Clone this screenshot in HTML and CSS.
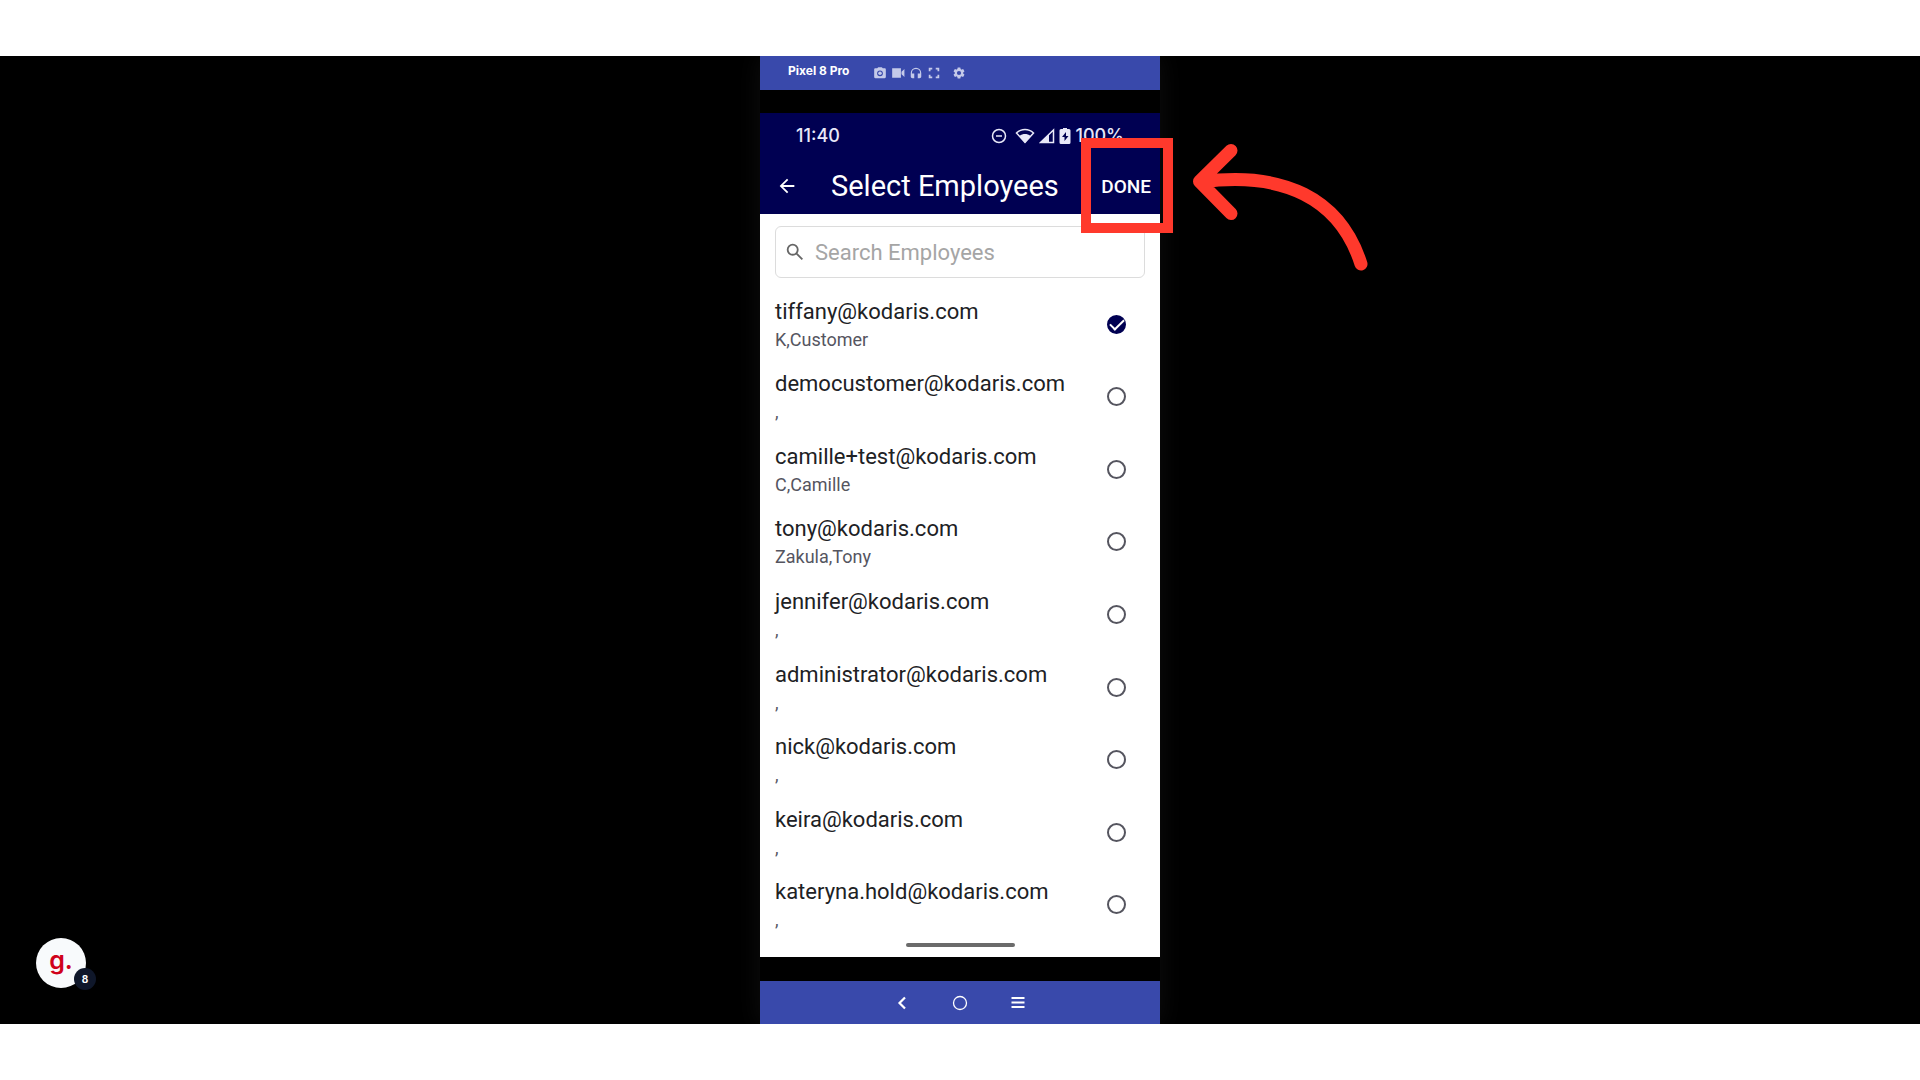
FILE: index.html
```html
<!DOCTYPE html>
<html lang="en">
<head>
    <meta charset="UTF-8">
    <meta name="viewport" content="width=device-width, initial-scale=1.0">
    <title>Select Employees</title>
    <link rel="stylesheet" href="styles.css">
</head>
<body>

<main class="stage">
    <div class="phone">
        <div class="emulator-bar">
            <span class="device-name">Pixel 8 Pro</span>
            <div class="tools">
                <button type="button" aria-label="Screenshot"><svg viewBox="0 0 24 24"><path fill-rule="evenodd" d="M9 2 7.200 4H4c-1.100 0-2 .9-2 2v13c0 1.100.9 2 2 2h16c1.100 0 2-.9 2-2V6c0-1.100-.9-2-2-2h-3.200L15 2zM12 17.500a5 5 0 1 1 0-10 5 5 0 0 1 0 10z"/><circle cx="12" cy="12.500" r="3"/></svg></button>
                <button type="button" aria-label="Record"><svg viewBox="0 0 24 24"><path d="M2 4h15v16H2zM18 10l5-5v14l-5-5z"/></svg></button>
                <button type="button" aria-label="Audio"><svg viewBox="0 0 24 24"><path d="M12 3a9 9 0 0 0-9 9v6c0 1.700 1.300 3 3 3h3v-8H5v-1a7 7 0 0 1 14 0v1h-4v8h3c1.700 0 3-1.300 3-3v-6a9 9 0 0 0-9-9z"/></svg></button>
                <button type="button" aria-label="Full screen"><svg viewBox="0 0 24 24"><path d="M3 3h6v3H6v3H3zM15 3h6v6h-3V6h-3zM3 15h3v3h3v3H3zM18 15h3v6h-6v-3h3z"/></svg></button>
                <button type="button" class="settings" aria-label="Settings"><svg viewBox="0 0 24 24"><path d="M19.140 12.940c.04-.3.060-.61.060-.94s-.02-.64-.07-.94l2.030-1.580a.49.490 0 0 0 .12-.61l-1.920-3.320a.49.490 0 0 0-.59-.22l-2.390.96a7 7 0 0 0-1.620-.94l-.36-2.540a.48.480 0 0 0-.48-.41h-3.840a.47.470 0 0 0-.47.410l-.36 2.540c-.59.240-1.130.57-1.620.94l-2.390-.96a.48.480 0 0 0-.59.220L2.740 8.870a.48.480 0 0 0 .12.610l2.030 1.580a6 6 0 0 0-.02 1.880l-2.030 1.580a.49.490 0 0 0-.12.610l1.920 3.320c.12.220.37.290.59.220l2.390-.96c.5.380 1.030.7 1.620.94l.36 2.540c.05.240.24.410.48.410h3.840c.24 0 .44-.17.470-.41l.36-2.540a7 7 0 0 0 1.620-.94l2.390.96c.22.080.47 0 .59-.22l1.920-3.320a.47.470 0 0 0-.12-.61zM12 15.600a3.600 3.600 0 1 1 0-7.200 3.600 3.600 0 0 1 0 7.200z"/></svg></button>
            </div>
        </div>

        <div class="screen">
            <div class="status-bar">
                <span>11:40</span>
                <div class="status-icons">
                    <svg class="dnd" viewBox="0 0 16 16"><circle cx="8" cy="8" r="6.500"/><path d="M5 8h6"/></svg>
                    <svg class="wifi" viewBox="0 0 20 16"><path class="outline" d="M1.500 5c5-4.700 12-4.700 17 0L10 14.500z"/><path d="M4.500 8c3.500-2.600 7.500-2.600 11 0L10 15z"/></svg>
                    <svg class="signal" viewBox="0 0 16 16"><path class="outline" d="M1.500 14.500 14.500 2v12.500z"/><path d="M1 15l9-9v9z"/></svg>
                    <svg class="battery" viewBox="0 0 12 18"><path fill-rule="evenodd" d="M4 1h4v1h2q1.500 0 1.500 1.500v12Q11.500 17 10 17H2Q.5 17 .5 15.500v-12Q.5 2 2 2h2zM7 5l-4 5h2.500v4l4-5H7z"/></svg>
                    <span>100%</span>
                </div>
            </div>

            <header class="app-bar">
                <button type="button" class="back" aria-label="Back"><svg viewBox="0 0 24 24"><path d="M20 11H7.800l5.600-5.600L12 4l-8 8 8 8 1.400-1.400L7.800 13H20z"/></svg></button>
                <h1>Select Employees</h1>
                <button type="button" class="done">DONE</button>
            </header>

            <div class="search">
                <label for="search" aria-label="Search Employees"><svg viewBox="0 0 24 24"><circle cx="9.500" cy="9.500" r="5.500"/><path d="M13.700 13.700 20 20"/></svg></label>
                <input type="text" id="search" name="search" placeholder="Search Employees">
            </div>

            <ul class="employees">
                <li><label for="e1"><span class="email">tiffany@kodaris.com</span><span class="name">K,Customer</span></label><input type="checkbox" id="e1" checked></li>
                <li><label for="e2"><span class="email">democustomer@kodaris.com</span><span class="name">,</span></label><input type="checkbox" id="e2"></li>
                <li><label for="e3"><span class="email">camille+test@kodaris.com</span><span class="name">C,Camille</span></label><input type="checkbox" id="e3"></li>
                <li><label for="e4"><span class="email">tony@kodaris.com</span><span class="name">Zakula,Tony</span></label><input type="checkbox" id="e4"></li>
                <li><label for="e5"><span class="email">jennifer@kodaris.com</span><span class="name">,</span></label><input type="checkbox" id="e5"></li>
                <li><label for="e6"><span class="email">administrator@kodaris.com</span><span class="name">,</span></label><input type="checkbox" id="e6"></li>
                <li><label for="e7"><span class="email">nick@kodaris.com</span><span class="name">,</span></label><input type="checkbox" id="e7"></li>
                <li><label for="e8"><span class="email">keira@kodaris.com</span><span class="name">,</span></label><input type="checkbox" id="e8"></li>
                <li><label for="e9"><span class="email">kateryna.hold@kodaris.com</span><span class="name">,</span></label><input type="checkbox" id="e9"></li>
            </ul>

            <div class="home-bar"></div>
        </div>

        <nav class="nav-bar">
            <button type="button" aria-label="Back"><svg viewBox="0 0 16 16"><path class="thick" d="M11 2.500 5.500 8l5.500 5.500"/></svg></button>
            <button type="button" aria-label="Home"><svg viewBox="0 0 16 16"><circle cx="8" cy="8" r="6.500"/></svg></button>
            <button type="button" aria-label="Menu"><svg viewBox="0 0 16 16"><path class="thick" d="M1.500 3h13M1.500 7.500h13M1.500 12h13"/></svg></button>
        </nav>

        <!-- callout on the DONE button -->
        <div class="highlight"></div>
        <svg class="arrow" viewBox="0 0 176 128"><path d="M38 6.500 6.500 37.500 38 69.500M8 38C90 27 147 54 168 120"/></svg>
    </div>

    <button type="button" class="guide" aria-label="Guide steps">
        <span class="guide-logo">g.</span>
        <span class="guide-count">8</span>
    </button>
</main>

</body>
</html>
```
FILE: styles.css
```css
* {
    box-sizing: border-box;
}
body {
    margin: 0;
    padding: 56px 0;
    background-color: #fff;
    font-family: Roboto, sans-serif;
}
button {
    padding: 0;
    border: none;
    background: none;
    color: inherit;
    font: inherit;
    cursor: pointer;
}
svg {
    display: block;
    fill: currentColor;
}
.stage {
    position: relative;
    display: flex;
    justify-content: center;
    min-height: calc(100vh - 112px);
    background-color: #000;
    overflow: hidden;
}
.phone {
    position: relative;
    display: flex;
    flex-direction: column;
    width: 400px;
    background-color: #000;
    box-shadow: 0 0 24px rgba(255, 255, 255, 0.06);
}

/* emulator toolbar */
.emulator-bar {
    display: flex;
    align-items: center;
    gap: 24px;
    height: 34px;
    padding: 0 28px;
    background-color: #3949ab;
    color: #fff;
}
.device-name {
    padding-bottom: 5px;
    font: bold 12px "Inter", sans-serif;
}
.tools {
    display: flex;
    gap: 4px;
    color: #c5cae9;
}
.tools svg {
    width: 14px;
    height: 14px;
}
.tools .settings {
    margin-left: 7px;
}

/* app screen */
.screen {
    display: flex;
    flex: 1;
    flex-direction: column;
    margin: 23px 0 24px;
    background-color: #fff;
}
.status-bar {
    display: flex;
    align-items: center;
    justify-content: space-between;
    height: 45px;
    padding: 0 36px;
    background-color: #000052;
    color: #e8e8f8;
    font: 500 18px "Inter", sans-serif;
}
.status-icons {
    display: flex;
    align-items: center;
    gap: 4px;
}
.dnd {
    width: 16px;
    height: 16px;
    margin-right: 4px;
    fill: none;
    stroke: currentColor;
    stroke-width: 1.5;
}
.wifi {
    width: 20px;
    height: 16px;
}
.signal {
    width: 16px;
    height: 16px;
}
.outline {
    fill: none;
    stroke: currentColor;
    stroke-width: 1.5;
}
.battery {
    width: 12px;
    height: 18px;
}
.app-bar {
    display: flex;
    align-items: center;
    height: 56px;
    padding: 0 9px 0 16px;
    background-color: #000052;
    color: #fff;
}
.back svg {
    width: 22px;
    height: 22px;
}
.app-bar h1 {
    flex: 1;
    margin: 0 0 0 33px;
    font-size: 29px;
    font-weight: 400;
}
.done {
    font-size: 19px;
    font-weight: 500;
}
.search {
    display: flex;
    align-items: center;
    gap: 9px;
    height: 52px;
    margin: 12px 15px 10px;
    padding: 0 8px;
    border: 1px solid #dcdcdc;
    border-radius: 6px;
}
.search svg {
    width: 22px;
    height: 22px;
    fill: none;
    stroke: #666;
    stroke-width: 2;
}
.search input {
    flex: 1;
    min-width: 0;
    padding: 0;
    border: none;
    outline: none;
    background: none;
    font: 22px Roboto, sans-serif;
}
.search input::placeholder {
    color: #a5a5a5;
}
.employees {
    display: grid;
    flex: 1;
    grid-auto-rows: 1fr;
    margin: 0;
    padding: 0 34px 0 15px;
    list-style: none;
}
.employees li {
    display: flex;
    align-items: center;
    justify-content: space-between;
}
.employees label {
    display: flex;
    flex-direction: column;
    padding-top: 3px;
}
.email {
    color: #202124;
    font-size: 22px;
    line-height: 28px;
}
.name {
    color: #55555f;
    font-size: 18px;
    line-height: 28px;
}
.employees input {
    display: grid;
    place-items: center;
    width: 19px;
    height: 19px;
    margin: 0;
    border: 2px solid #55555f;
    border-radius: 50%;
    appearance: none;
}
.employees input:checked {
    border-color: #000052;
    background-color: #000052;
}
.employees input:checked::before {
    content: "";
    width: 12px;
    height: 6px;
    margin-bottom: 3px;
    border: solid #fff;
    border-width: 0 0 2px 2px;
    transform: rotate(-45deg);
}
.home-bar {
    align-self: center;
    width: 109px;
    height: 4px;
    margin: 2px 0 10px;
    border-radius: 2px;
    background-color: #6b6b6b;
}

/* system navigation */
.nav-bar {
    display: flex;
    align-items: center;
    justify-content: center;
    gap: 42px;
    height: 43px;
    background-color: #3949ab;
    color: #fff;
}
.nav-bar svg {
    width: 16px;
    height: 16px;
    fill: none;
    stroke: currentColor;
    stroke-width: 1.3;
}
.nav-bar .thick {
    stroke-width: 2.2;
}

/* callout */
.highlight {
    position: absolute;
    top: 82px;
    left: 321px;
    width: 92px;
    height: 95px;
    border: 10px solid #ff392c;
    pointer-events: none;
}
.arrow {
    position: absolute;
    top: 88px;
    left: 433px;
    width: 176px;
    height: 128px;
    fill: none;
    stroke: #ff392c;
    stroke-width: 13;
    stroke-linecap: round;
    stroke-linejoin: round;
    pointer-events: none;
}

/* floating guide button */
.guide {
    position: absolute;
    bottom: 36px;
    left: 36px;
    width: 50px;
    height: 50px;
    padding-bottom: 6px;
    border-radius: 50%;
    background-color: #f8fafc;
}
.guide-logo {
    color: #d0021b;
    font: 600 25px/40px "Inter", sans-serif;
}
.guide-count {
    position: absolute;
    right: -10px;
    bottom: -2px;
    width: 22px;
    height: 22px;
    border-radius: 50%;
    background-color: #0f172a;
    color: #fff;
    font: bold 10px/22px "Inter", sans-serif;
}
```
